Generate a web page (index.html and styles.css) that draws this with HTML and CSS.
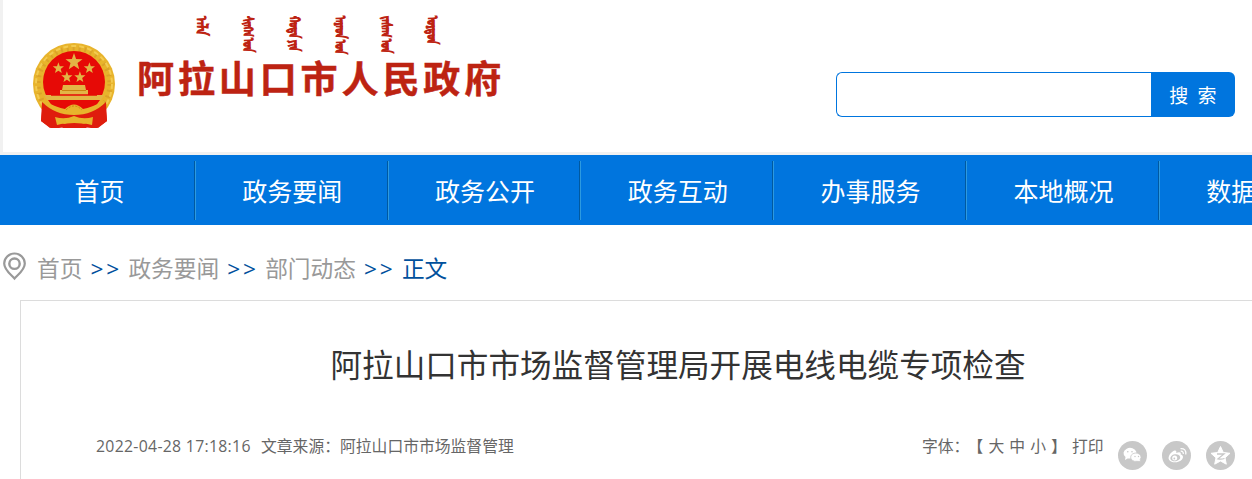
FILE: index.html
```html
<!DOCTYPE html>
<html lang="zh-CN">
<head>
<meta charset="utf-8">
<title>阿拉山口市市场监督管理局开展电线电缆专项检查</title>
<link rel="stylesheet" href="styles.css">
</head>
<body>
<div class="header">
	<div class="logo">
		<svg class="emblem" width="86" height="88" viewBox="0 0 86 88">
			<path d="M12 60L10 79 20 86H28L43 84 60 86H66L76 79 74 60z" fill="#df1d0d"/>
			<circle cx="43" cy="42" r="41" fill="#e8b42c"/>
			<circle cx="43" cy="42" r="36" fill="none" stroke="#dba328" stroke-width="5" stroke-dasharray="2 4"/>
			<circle cx="43" cy="42" r="38" fill="none" stroke="#f3cb50" stroke-width="2" stroke-dasharray="5 3"/>
			<circle cx="43" cy="40" r="31" fill="#e60a06"/>
			<g fill="#e3b545">
				<path id="star" d="M43 11l2.100 6 6.400.2-5 3.900 1.700 6.200-5.200-3.500-5.200 3.500 1.700-6.200-5-3.900 6.400-.2z"/>
				<use href="#star" transform="translate(-1 13) scale(.66)"/>
				<use href="#star" transform="translate(30 13) scale(.66)"/>
				<use href="#star" transform="translate(7.500 22) scale(.66)"/>
				<use href="#star" transform="translate(20.500 22) scale(.66)"/>
				<path d="M32 43H54L55 48H57V53H73L70 58H16L13 53H29V48H31z"/>
			</g>
			<path d="M31 48.500H55" stroke="#c98511"/>
			<path d="M20 53H66" stroke="#e60a06" stroke-width="1.500"/>
			<path d="M17 58H69L64 65Q52 62 43 69 34 62 22 65z" fill="#e60a06"/>
			<path d="M12 58Q26 66 34 67 43 58 52 67 60 66 74 58L69 68Q57 73 43 73 29 73 17 68z" fill="#e8b42c"/>
			<path d="M35 68Q43 60 51 68" fill="none" stroke="#c98511" stroke-dasharray="2 1.500"/>
			<path d="M11 60Q24 73 43 73 62 73 75 60L76 79 67 86 61 83V77Q43 81 26 77V83L19 86 10 79z" fill="#df1d0d"/>
			<path d="M24 75Q34 78 43 74 52 78 62 75L61 83Q51 80 43 82 35 80 26 83z" fill="#e8b42c"/>
			<path d="M29 83Q43 79 58 83L55 86H32z" fill="#df1d0d"/>
		</svg>
		<div class="names">
			<div class="mongol">
				<span class="short">ᠠᠯᠠ</span><span>ᠰᠢᠩᠬ ᠤᠨ</span><span>ᠬᠣᠲᠠ ᠶᠢᠨ</span><span>ᠠᠷᠠᠳ ᠤᠨ</span><span>ᠵᠠᠰᠠᠭ ᠤᠨ</span><span>ᠣᠷᠳᠣᠨ</span>
			</div>
			<div class="name">阿拉山口市人民政府</div>
		</div>
	</div>
	<form class="search">
		<input type="text" class="search-text">
		<button type="button" class="search-btn">搜 索</button>
	</form>
</div>
<ul class="nav">
	<li>首页</li>
	<li>政务要闻</li>
	<li>政务公开</li>
	<li>政务互动</li>
	<li>办事服务</li>
	<li>本地概况</li>
	<li>数据开放</li>
</ul>
<div class="crumbs">
	<svg class="pin" width="24" height="30" viewBox="0 0 24 30" fill="none" stroke="#999">
		<path d="M11.500 26.500C8 22.500 1.200 18 1.200 11.500A10.300 10 0 0 1 21.800 11.500C21.800 18 15 22.500 11.500 26.500z" stroke-width="2.200"/>
		<circle cx="11.500" cy="11.700" r="5.200" stroke-width="2.400"/>
	</svg>
	<span>首页</span><i>&gt;&gt;</i><span>政务要闻</span><i>&gt;&gt;</i><span>部门动态</span><i>&gt;&gt;</i><span class="current">正文</span>
</div>
<div class="article">
	<h1>阿拉山口市市场监督管理局开展电线电缆专项检查</h1>
	<div class="meta">
		<span class="date">2022-04-28 17:18:16</span>
		<span class="source">文章来源：阿拉山口市市场监督管理</span>
		<span class="tools">字体：<b>【</b> 大 中 小 】 打印</span>
		<div class="share">
			<svg width="30" height="30" viewBox="0 0 30 30">
				<circle cx="14.500" cy="14.500" r="14.500" fill="#c8c8c8"/>
				<path d="M7 19l.5-3A6.500 5.300 0 1 1 12 17.500L9.500 17.500z" fill="#fff"/>
				<path d="M22.500 20.500l-.3-2A5.200 4.200 0 1 0 19 20.300z" fill="#fff" stroke="#c8c8c8" stroke-width=".8"/>
				<g fill="#c8c8c8"><circle cx="9.800" cy="10.800" r=".8"/><circle cx="14" cy="10.800" r=".8"/><circle cx="17" cy="15.500" r=".7"/><circle cx="20.500" cy="15.500" r=".7"/></g>
			</svg>
			<svg width="30" height="30" viewBox="0 0 30 30">
				<circle cx="14.500" cy="14.500" r="14.500" fill="#c8c8c8"/>
				<path d="M12.500 9.500C14.500 9 14.500 10.500 14.200 12 17 10.800 19.500 11 18.700 13.500 21.500 14.300 21.500 16.500 20 18.500 17 22 9.500 22.300 7.200 19 5 15.500 9.500 10.500 12.500 9.500z" fill="#fff"/>
				<ellipse cx="13.300" cy="16.800" rx="5" ry="3.500" fill="#c8c8c8" transform="rotate(-10 13.300 16.800)"/>
				<circle cx="12.700" cy="17" r="2.500" fill="#fff"/>
				<circle cx="12.300" cy="17.500" r=".9" fill="#c8c8c8"/>
				<path d="M18.700 10.200Q21.500 10 21.300 13M18.500 7.700Q24.500 7.300 23.800 13.500" fill="none" stroke="#fff" stroke-width="1.200"/>
			</svg>
			<svg width="30" height="30" viewBox="0 0 30 30">
				<circle cx="14.500" cy="14.500" r="14.500" fill="#c8c8c8"/>
				<path d="M14.500 5.500l2.800 6 6.700.8-5 4.500 1.300 6.400-5.800-3.200-5.800 3.200 1.300-6.400-5-4.500 6.700-.8z" fill="#fff" stroke="#fff" stroke-linejoin="round"/>
				<path d="M11 13H18L12 17.800Q15 18.500 18.500 17.500" fill="none" stroke="#c8c8c8" stroke-width="1.300"/>
			</svg>
		</div>
	</div>
</div>
</body>
</html>
```
FILE: styles.css
```css
body{
	margin: 0;
	height: 479px;
	font-family: 'Open Sans', 'Noto Sans CJK SC', sans-serif;
	background: #fff;
	overflow: hidden;
}
.header{
	display: flex;
	justify-content: space-between;
	box-sizing: border-box;
	height: 155px;
	border-left: 3px solid #f1f1f1;
	border-bottom: 3px solid #f1f1f1;
}
.logo{
	display: flex;
}
.emblem{
	margin: 42px 0 0 28px;
}
.names{
	margin: 16px 0 0 20px;
	color: #bd2312;
}
.mongol{
	display: flex;
	gap: 26px;
	height: 40px;
	padding-left: 55px;
}
.mongol span{
	width: 20px;
	writing-mode: vertical-lr;
	font-size: 9.3px;
	line-height: 20px;
	white-space: nowrap;
	transform: scaleX(1.6);
	-webkit-text-stroke: 1px #bd2312;
}
.mongol .short{
	font-size: 13px;
	transform: scaleX(1.2);
}
.name{
	font: bold 37px/42px 'Noto Sans CJK SC', sans-serif;
	letter-spacing: 3.9px;
	white-space: nowrap;
	-webkit-text-stroke: .5px #bd2312;
}
.search{
	display: flex;
	width: 399px;
	height: 45px;
	margin: 72px 17px 0 0;
}
.search-text{
	flex: 1;
	min-width: 0;
	box-sizing: border-box;
	border: 1px solid #0075de;
	border-right: 0;
	border-radius: 6px 0 0 6px;
	background: #fff;
}
.search-btn{
	width: 84px;
	padding: 0;
	border: 0;
	border-radius: 0 6px 6px 0;
	background: #0075de;
	color: #fff;
	font: 19px/45px 'Noto Sans CJK SC', sans-serif;
	word-spacing: 5px;
}
.nav{
	display: flex;
	height: 70px;
	margin: 0;
	padding: 0 0 0 3px;
	list-style: none;
	background: #0075de;
	overflow: hidden;
}
.nav li{
	flex: 0 0 192.8px;
	box-sizing: border-box;
	height: 59px;
	margin-top: 6px;
	padding-left: 1px;
	border-right: 1px solid #2d9ae0;
	box-shadow: inset -1px 0 #0059a0;
	color: #fff;
	font-size: 25px;
	line-height: 60px;
	text-align: center;
}
.crumbs{
	display: flex;
	height: 75px;
	padding-left: 3px;
	color: #999;
	font-size: 22.7px;
	line-height: 87px;
}
.pin{
	margin: 27px 10px 0 0;
}
.crumbs i{
	width: 46px;
	color: #00509c;
	font-style: normal;
	letter-spacing: 3px;
	text-indent: 2px;
	text-align: center;
}
.crumbs .current{
	color: #00509c;
}
.article{
	width: 1314px;
	height: 178px;
	margin-left: 20px;
	border: 1px solid #dcdcdc;
	border-bottom: 0;
}
.article h1{
	margin: 0;
	padding-top: 35px;
	color: #333;
	font-size: 31.6px;
	font-weight: normal;
	line-height: 58px;
	text-align: center;
}
.meta{
	display: flex;
	margin-top: 37px;
	padding-left: 75px;
	color: #666;
	font-size: 15.8px;
	line-height: 30px;
	white-space: nowrap;
}
.date{
	width: 165px;
	letter-spacing: .3px;
}
.source{
	width: 661px;
}
.tools{
	width: 196px;
	word-spacing: 1px;
}
.tools b{
	margin-left: 6px;
	font-weight: normal;
}
.share{
	display: flex;
	gap: 14px;
	padding-top: 10px;
}
.share svg{
	display: block;
}
```
